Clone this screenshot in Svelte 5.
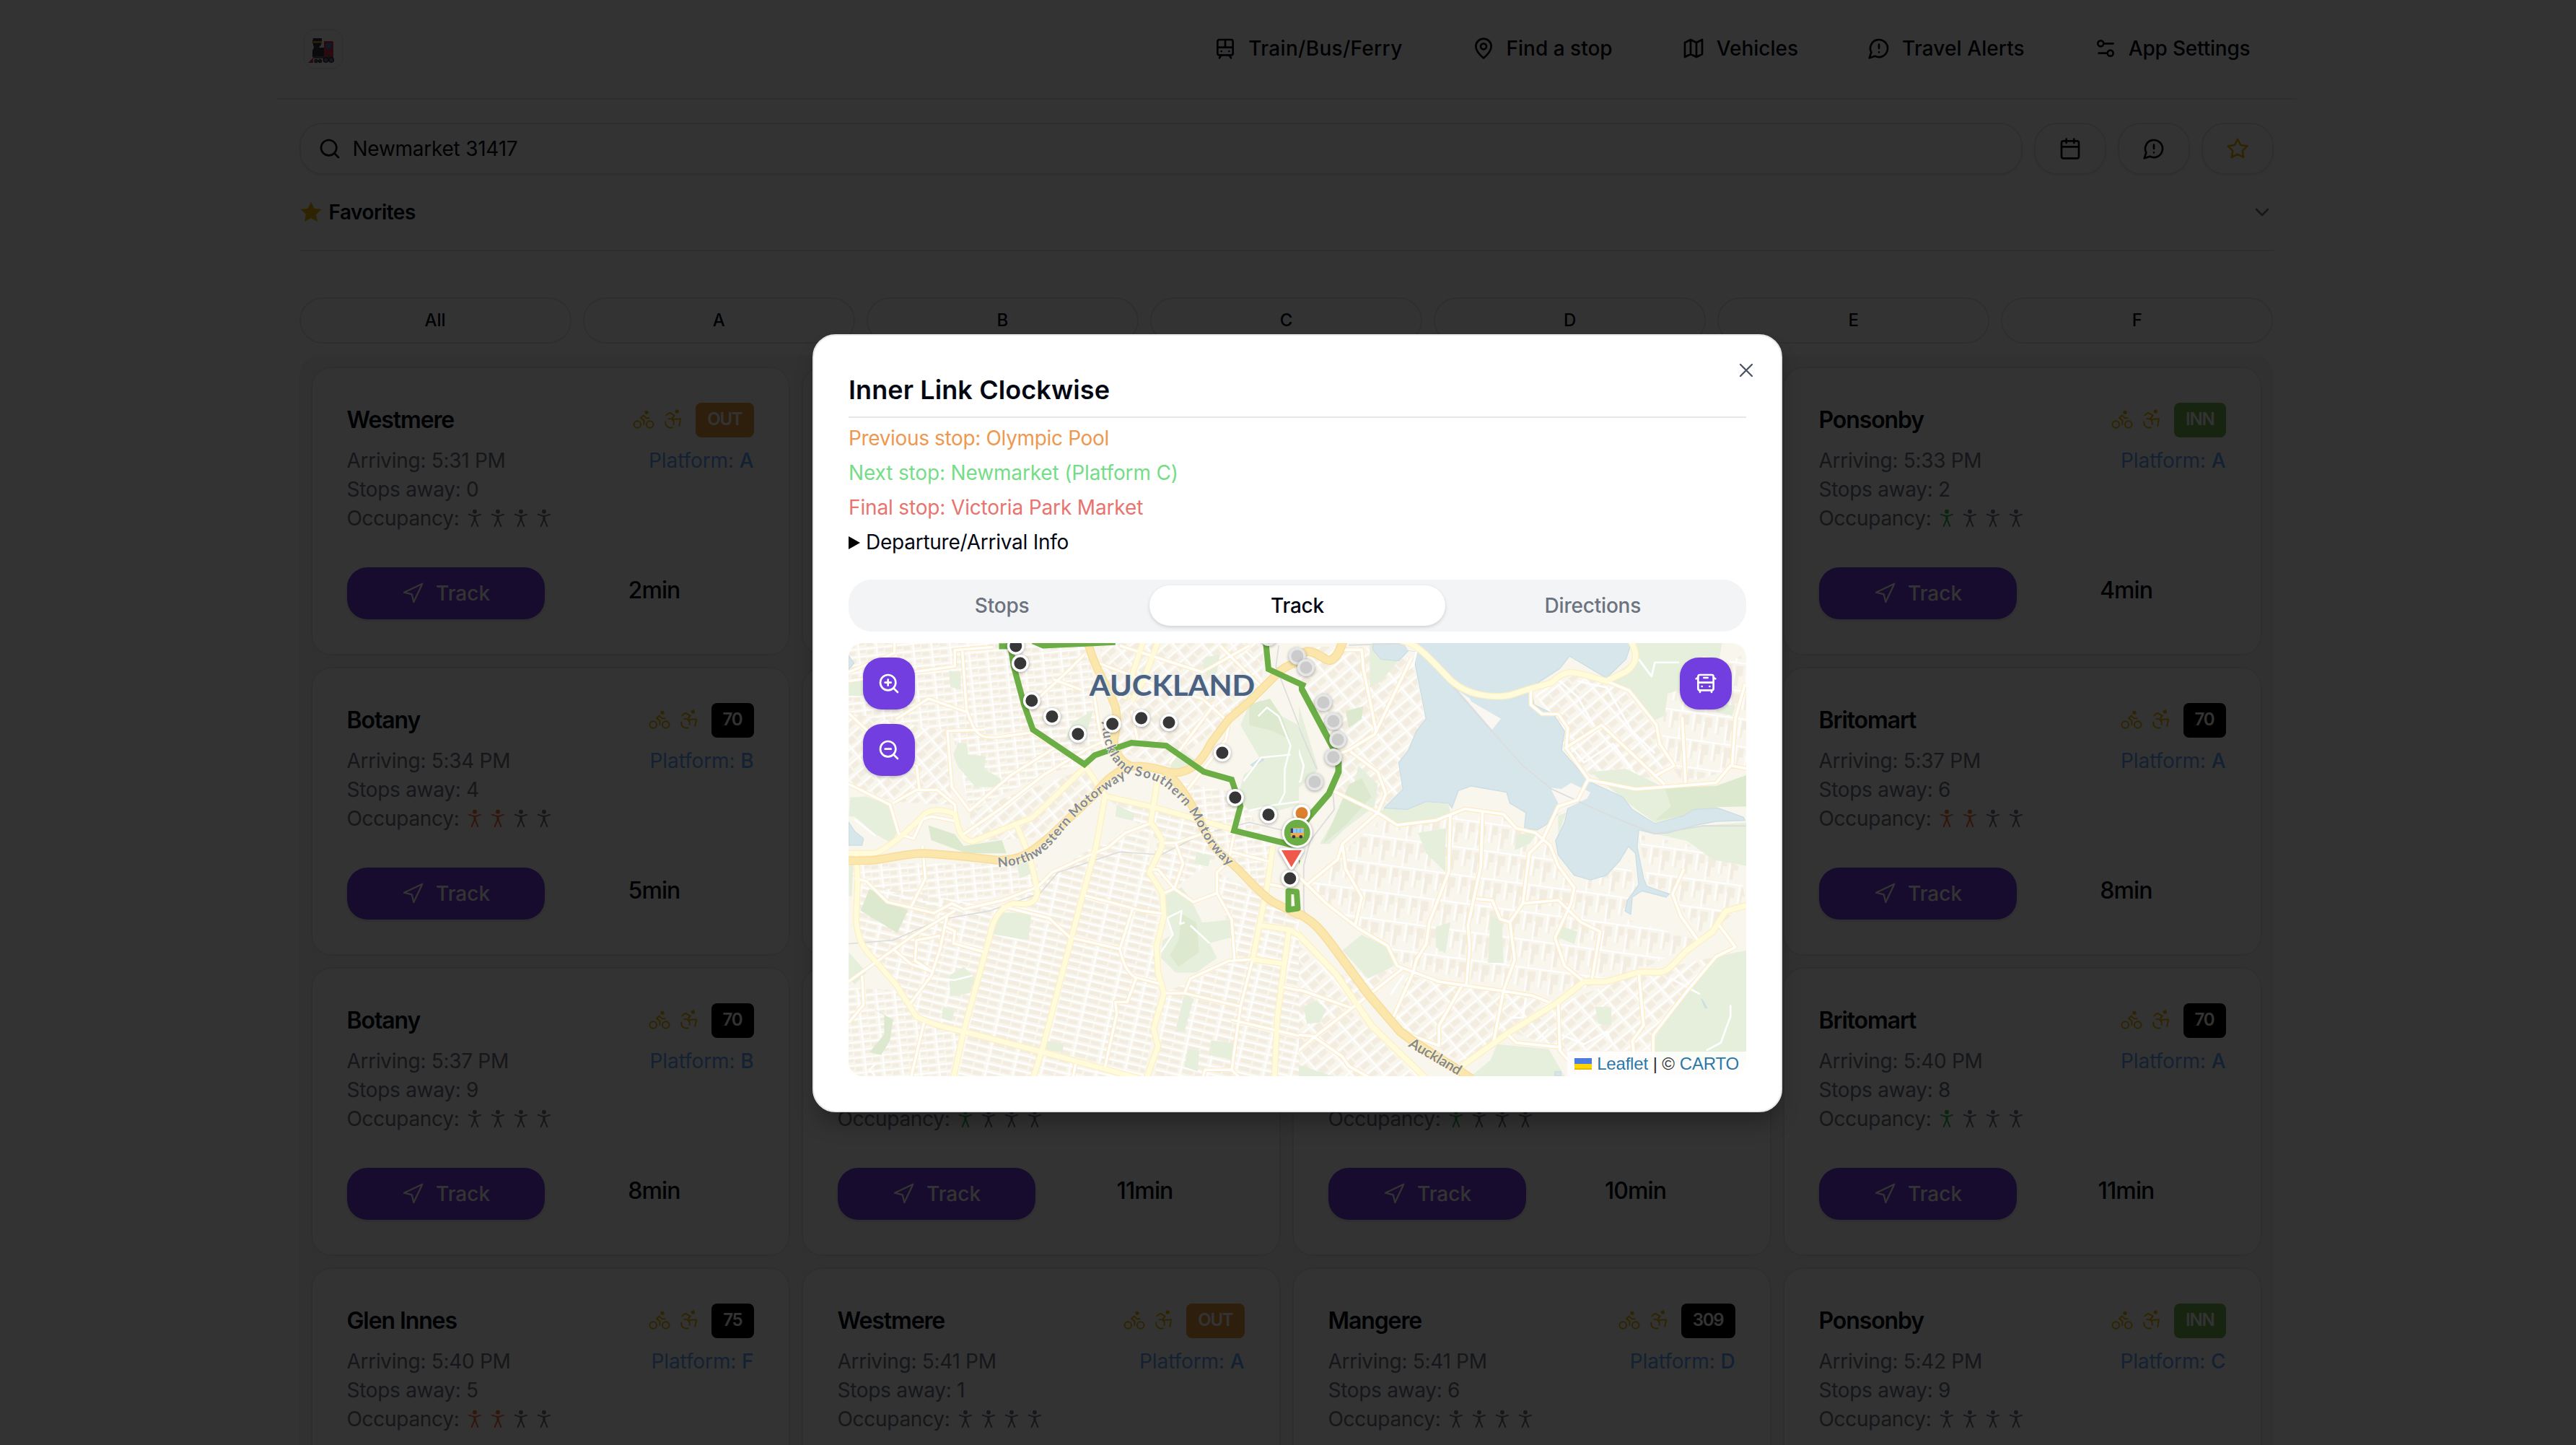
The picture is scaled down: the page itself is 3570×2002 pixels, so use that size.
<script>
  const nav = [
    { label: 'Train/Bus/Ferry', icon: 'train' },
    { label: 'Find a stop', icon: 'pin' },
    { label: 'Vehicles', icon: 'map' },
    { label: 'Travel Alerts', icon: 'alert' },
    { label: 'App Settings', icon: 'settings' }
  ];
  const platforms = ['All', 'A', 'B', 'C', 'D', 'E', 'F'];
  const out = '#e6963f', inn = '#75b552', black = '#000';
  const green = '#35b552', orange = '#f0703a';
  const cards = [
    { name: 'Westmere', time: '5:31 PM', away: 0, platform: 'A', badge: 'OUT', color: out, occ: 0, mins: 2 },
    null, null,
    { name: 'Ponsonby', time: '5:33 PM', away: 2, platform: 'A', badge: 'INN', color: inn, occ: 1, mins: 4 },
    { name: 'Botany', time: '5:34 PM', away: 4, platform: 'B', badge: '70', color: black, occ: 2, mins: 5 },
    null, null,
    { name: 'Britomart', time: '5:37 PM', away: 6, platform: 'A', badge: '70', color: black, occ: 2, mins: 8 },
    { name: 'Botany', time: '5:37 PM', away: 9, platform: 'B', badge: '70', color: black, occ: 0, mins: 8 },
    { name: '', occ: 1, mins: 11 },
    { name: '', occ: 1, mins: 10 },
    { name: 'Britomart', time: '5:40 PM', away: 8, platform: 'A', badge: '70', color: black, occ: 1, mins: 11 },
    { name: 'Glen Innes', time: '5:40 PM', away: 5, platform: 'F', badge: '75', color: black, occ: 2, mins: 10 },
    { name: 'Westmere', time: '5:41 PM', away: 1, platform: 'A', badge: 'OUT', color: out, occ: 0, mins: 11 },
    { name: 'Mangere', time: '5:41 PM', away: 6, platform: 'D', badge: '309', color: black, occ: 0, mins: 11 },
    { name: 'Ponsonby', time: '5:42 PM', away: 9, platform: 'C', badge: 'INN', color: inn, occ: 0, mins: 12 }
  ];
  const personColor = (occ, i) => (i < occ ? (occ === 1 ? green : orange) : '#6b7280');

  // Map geometry: the west sheet and the east sheet each use their own grid.
  const west = {
    parks: 'M45 575 100 572 190 605 205 690 185 730 130 700 60 640 40 640ZM410 390 440 390 445 430 505 435 500 480 555 510 560 540 470 540 410 470 395 430ZM550 965 660 970 650 1060 530 1040ZM1110 910 1170 880 1200 920 1240 1000 1340 990 1340 1050 1265 1070 1290 1120 1220 1170 1150 1170 1100 1120 1105 1060 1140 1040 1120 980ZM1400 260 1470 240 1510 300 1568 330 1568 600 1500 620 1400 620 1360 580 1380 500 1440 450 1370 330ZM380 1180 430 1150 470 1190 450 1240 385 1250ZM40 1100 100 1170 60 1210 40 1190ZM800 320 870 280 850 350 770 390ZM1270 1400 1348 1410 1340 1465 1262 1450ZM1180 1240 1210 1260 1180 1370 1148 1370ZM1250 100 1300 90 1290 150 1260 170 1240 130ZM1190 1430 1230 1435 1225 1505 1180 1490ZM360 1285 400 1295 390 1335 355 1325ZM1150 400 1220 450 1180 490 1130 480ZM950 600 1010 630 1005 655 945 640ZM1220 760 1270 775 1260 810 1215 800ZM380 145 420 150 420 210 385 200ZM40 180 120 170 90 230 40 230ZM700 1400 770 1410 765 1440 705 1430ZM610 800 660 790 670 830 620 850ZM40 800 55 800 50 910 40 910Z',
    woods: 'M110 885 240 960 205 1035 80 960ZM310 670 400 700 430 740 560 720 575 765 440 765 320 720ZM100 1280 190 1330 180 1400 150 1450 110 1440 160 1380 160 1310ZM1400 260 1470 240 1510 300 1540 380 1480 350 1400 330ZM1170 970 1220 1000 1230 1100 1160 1150 1130 1110 1160 1060Z',
    water: 'M40 660 L60 690 90 715 85 738 40 738ZM40 95 58 120 40 140ZM1405 465 1440 440 1448 448 1412 470Z',
    motor: 'M40 790H100C160 788 230 765 290 765C350 768 430 775 540 788C620 790 650 770 720 710L880 560C900 530 930 500 980 475C1000 465 1050 465 1130 490C1200 500 1240 450 1270 390L1330 310 1400 250 1480 170C1510 135 1540 120 1590 112M850 45C870 120 900 170 930 230C960 290 950 330 940 380C945 430 965 455 1000 470M1110 485C1160 520 1200 590 1230 650C1260 720 1290 760 1330 790C1390 840 1420 890 1480 930L1590 985',
    primary: 'M40 765H130C180 745 250 680 300 630C330 610 370 620 400 630C410 680 420 720 460 725L660 645C700 615 770 540 840 475M65 765 70 860 65 990C70 1060 90 1090 130 1130L200 1210 270 1320C320 1345 380 1360 430 1370L700 1440 1030 1530M840 465 910 570 880 740 820 960 700 1420 665 1530M905 570 1080 610 1350 685M1090 500 1075 600 1065 660C1110 720 1110 730 1095 760L1060 830 1105 900 1110 980 1085 1080 1090 1170 1110 1240 1075 1360 1090 1420 1050 1530M610 670C650 760 670 820 680 900C675 940 640 940 600 935C550 950 530 990 520 1040L430 1370 395 1530M1480 740 1460 880 1410 1130M1535 1020 1495 1320 1485 1530M1440 1010 1540 1025 1590 1060M1410 1125 1520 1140M1090 45 1040 180 1000 250M1040 45 975 240',
    secondary: 'M40 530 180 600 210 700 260 715 290 650 320 640 400 655M190 595 270 550 340 550 400 600 405 650M60 850 100 860 170 930 330 968 390 935 430 955 560 925 680 880 730 830 860 770 920 745 980 695 1060 665M530 65 400 75V130L40 180M425 75 440 280 460 330C480 370 500 375 550 370L660 355 740 400M440 285 310 240 200 310M40 290 180 420 270 470 280 550M500 345 375 350 390 540 450 620 590 500 750 400M430 700 560 610 700 500 850 410 905 385M660 260 780 150 840 90M735 175 830 210M890 120 1100 200 1240 240 1330 320M960 60 1240 150 1400 60M1300 60 1440 200M870 210 890 340 910 420M1000 280 1020 380M1280 260 1130 460M1330 330 1320 380 1190 550M290 740 300 850 250 950M375 970 350 1090 320 1180 245 1280M400 960 250 1050 40 1200M190 1090 250 1140 320 1165M85 1180 90 1280 40 1340M295 1340 250 1530M350 1045 270 1060 265 1130 320 1165M370 1015 400 1030 395 1070 500 1100M560 945 720 985 790 1050 960 1090C970 1130 980 1165 1010 1185L1105 1210M830 905 1035 960 1110 970M1005 950 960 1090M1015 1190 985 1270 945 1270 950 1310 910 1490M1110 1240 1180 1240 1370 1285M1180 1240 1200 1190 1330 1130 1410 1125M1350 1130 1340 990 1290 900 1290 830 1330 790 1350 690M1110 900 1145 885 1210 930 1290 900M1095 730 1150 730 1280 685M1150 730 1175 800 1145 885 1090 820 1065 820M1410 1130 1370 1285 1340 1500M1340 1330 1590 1390M1240 1530 1250 1500 1340 1500 1370 1530M1500 1215 1590 1235M1340 760 1475 795M1470 870 1590 895M800 1530 810 1480M195 50 195 85 40 150',
    minor: 'M1380 520 1440 440 1540 430M1430 300 1460 270 1500 300 1540 400 1520 480 1520 560 1500 600M1400 620 1490 600 1568 590M1120 985 1170 960 1165 1005 1180 1000M320 1190 400 1195 460 1180M60 650 130 705M130 1480 110 1500 130 1521M1265 1070 1200 1010M1380 70 1420 110M1100 1100 1140 1040 1120 980',
    rail: 'M40 1072 190 1060 350 990 520 960 690 900 750 830 960 760 1100 770 1240 700 1400 660 1568 700M1500 60 1490 130 1568 330',
    route: 'M550 62 600 62M587 50 600 130 635 260 665 345 840 463 875 432 1000 390 1118 400 1245 488 1340 515 1370 605 1348 688 1560 740M665 45 700 60 945 48M1455 40 1465 140 1590 198'
  };
  const east = {
    water: 'M275 40 275 70 300 100 355 105 385 72 410 75 405 110 440 290 410 330 385 390 355 430 368 515 310 575 380 580 440 555 510 560 520 575 540 520 580 505 690 525 700 560 750 590 745 640 785 645 810 630 843 600 870 575 880 575 870 620 842 680 850 725 900 790 950 805 1000 790 1040 745 1068 698 1090 720 1100 820 1065 870 1058 905 1075 915 1080 860 1110 840 1185 860 1195 850 1125 825 1115 800 1095 700 1100 645 1150 658 1190 655 1280 630 1340 618 1430 615 1425 605 1345 575 1270 580 1240 600 1150 625 1080 580 1050 540 945 490 860 390 870 330 835 275 775 245 765 190 855 130 885 90 1000 160 1060 100 1080 40ZM1295 1185 1312 1214 1306 1214ZM840 1418H858V1432H840Z',
    land: 'M825 510 860 515 890 495 950 525 940 545 880 575 840 600 850 560ZM540 200 575 225 580 235 672 290 645 325ZM410 40 365 40 385 72 410 75Z',
    parks: 'M1080 40 1360 40 1350 100 1300 90 1250 190 1190 210 1180 280 1140 300 1060 190 1000 165 1080 110ZM950 460 1060 450 1180 510 1340 505 1434 470 1434 570 1345 572 1240 600 1150 622 1080 570ZM1150 658 1280 632 1434 622 1434 760 1330 740 1250 680ZM310 575 380 580 440 557 510 562 515 590 460 615 350 625 290 595ZM230 440 290 500 280 570 190 640 140 690 110 690 150 620 200 560ZM415 655 500 640 500 780 440 720ZM180 1030 240 980 320 1020 340 1080 260 1120ZM640 920 675 930 680 1070 632 1070ZM1434 1030 1434 1380 1150 1380 1150 1310 1230 1180 1340 1050ZM660 1330 820 1345 870 1432 580 1432 640 1380ZM850 950 910 970 900 1010 840 985ZM965 1210 1015 1212 1015 1270 975 1265ZM720 660 785 655 760 690 715 710ZM60 1210 100 1190 130 1220 110 1260 70 1265ZM45 250 105 450 90 470 45 510ZM265 55 380 60 350 110 300 170 265 190ZM470 955 515 940 500 1040 470 1020ZM0 1380 150 1432 0 1432ZM1350 240 1400 250 1390 280 1340 270ZM850 600 875 590 850 660Z',
    woods: 'M1180 510 1340 505 1434 470 1434 570 1345 572 1240 600 1150 615 1200 570ZM190 265 245 250 240 290 200 320ZM200 500 240 480 270 540 190 630 120 690 150 620Z',
    motor: 'M-10 890 30 905C90 935 110 960 160 1030L260 1170 360 1290C420 1340 480 1370 580 1440M-10 108 70 75C110 75 130 115 150 100 170 85 175 60 182 40',
    primary: 'M360 40C420 50 460 110 520 170C570 215 640 225 700 215L760 195 830 175C870 130 900 140 950 155L1000 170 1060 140C1100 110 1095 80 1075 40M0 955 30 965 160 1105 270 1270 440 1440M1440 885 1370 905 1330 970 1250 1030C1200 1080 1190 1105 1150 1100L1100 1100 1000 1130 930 1130 850 1195 700 1290 550 1400M15 965 0 1110',
    secondary: 'M180 70H240L245 130 285 330M395 95 280 340 200 390 150 410M205 395 290 460 315 530 290 590 350 630 470 615 560 578 680 595 720 640 780 655 825 695M150 520 290 590 180 690 165 740 70 820M945 480 910 550 850 570 800 680 760 720 740 880 700 940 715 1060 680 1160 650 1320M825 695 850 760 900 830 890 880 840 990 870 1080 925 1125M515 595 510 780 450 940 440 1010 410 1060 400 1100 335 1250M615 590 610 760 570 950 575 1020 565 1140M595 865 645 870 670 930 700 940M740 880 850 870 920 940 980 970 955 1120M180 690 190 770 240 860 220 950M40 790 130 880 230 960 320 1015 350 1080 480 1130 680 1160 770 1175 820 1195M365 1090 240 1190 90 1310 0 1390M0 1145 60 1160 210 1215M0 1295 90 1305 180 1370 200 1400 270 1440M550 1145 480 1270V1335L390 1300 330 1260M690 1295 720 1325 860 1340M850 1195 855 1350 880 1380M1100 1100 1115 1270 1080 1320 1085 1360M1145 1360V1300L1250 1160 1340 1050 1400 1020 1350 950M1000 170 1070 200 1155 310 1165 370 1210 440 1155 470M765 195V245L800 275 850 275 880 320 875 385 945 485 1090 515 1340 495 1385 440 1440 450M1390 440 1400 290 1430 180M870 385 985 310 1180 500M1235 285 1245 495M1240 770 1205 850 1230 920 1285 1000',
    minor: 'M410 75 400 120 300 200M780 220 850 165 910 220 960 310M910 170 1000 190 1080 330 1150 400M890 380 930 430 1020 370 1080 450M700 1245 740 1245 750 1180M330 1170 370 1110M1310 1350 1355 1325 1385 1240V1205M1100 100 1140 155 1150 110 1225 110M0 380 40 380 60 440 50 490 20 500M860 1300 930 1330 1000 1290 1020 1330M780 1320 820 1280M1180 1150 1200 1120 1290 1170',
    rail: 'M150 520 155 580 80 680 60 760 60 900 75 935M525 190 640 325 740 440 830 515 1000 595 1150 658 1300 632 1440 633M0 210 100 450M200 55 360 50',
    route: 'M-10 150 45 178 155 390 168 430 168 460 138 530 75 605 45 650M40 740 22 790'
  };
  // Street grids: pattern direction and the area it covers
  const westBlocks = [
    ['a', 'M40 50 850 50 900 380 840 460 700 500 450 620 390 350 40 290Z'],
    ['b', 'M450 620 840 480 900 560 700 710 460 725ZM40 290 375 350 390 600 190 590 40 530Z'],
    ['b', 'M890 50 1450 50 1440 250 1330 310 1130 470 950 420Z'],
    ['c', 'M860 750 1060 680 1060 830 1105 970 1090 1220 1080 1350 1040 1521 400 1521 520 1040 560 945 730 830Z'],
    ['a', 'M40 800 680 800 680 880 330 960 65 860ZM1150 520 1350 560 1480 740 1450 900 1330 780 1200 600ZM40 1220 200 1230 290 1350 420 1370 380 1521 40 1521Z'],
    ['c', 'M920 580 1200 630 1290 780 1150 880 1060 820 1090 720ZM1290 830 1480 930 1568 980V1521H1080L1110 1240 1350 1130ZM80 870 560 950 430 1370 270 1320 70 1060Z']
  ];
  const eastBlocks = [
    ['b', 'M45 60 245 60 400 100 435 290 355 430 365 515 290 590 150 520 150 400 45 190ZM785 220 900 150 1060 200 1150 320 1200 440 1160 480 950 470 870 380Z'],
    ['d', 'M290 620 500 600 740 610 820 700 900 830 1070 740 1090 830 1060 930 1290 1000 1100 1095 840 1180 380 1080 200 940 60 820Z'],
    ['b', 'M380 1110 840 1195 550 1390 340 1260ZM700 1290 850 1200 1100 1105 1340 1050 1230 1180 1140 1350 880 1350ZM0 980 160 1110 350 1090 200 1220 420 1432 0 1432Z'],
    ['d', 'M1180 220 1434 80V440L1240 495 1170 400ZM1100 660 1290 700 1410 760 1434 880 1300 990 1200 850 1130 820Z']
  ];
  const w = (x, y) => [1160 + x / 2.45, 870 + y / 2.45];
  const e = (x, y) => [1780 + x / 2.24, 870 + y / 2.306];
  const upcoming = [w(607, 61), w(622, 120), w(661, 247), w(730, 301), w(818, 360), w(935, 326), w(1033, 306), w(1127, 321), w(1308, 424), w(1352, 576), w(1465, 634), w(1538, 850)];
  const passed = [w(1465, 32), e(40, 90), e(67, 127), e(121, 238), e(152, 298), e(166, 357), e(152, 413), e(94, 492)];
</script>

{#snippet icon(name, cls)}
  <svg class={cls} viewBox="0 0 24 24" fill="none" stroke="currentColor" stroke-width="2" stroke-linecap="round" stroke-linejoin="round">
    {#if name === 'train'}
      <rect width="16" height="16" x="4" y="3" rx="2" /><path d="M4 11h16M12 3v8m-4 8-2 3m12 0-2-3M8 15h.01M16 15h.01" />
    {:else if name === 'pin'}
      <path d="M20 10c0 6-8 12-8 12s-8-6-8-12a8 8 0 0 1 16 0Z" /><circle cx="12" cy="10" r="3" />
    {:else if name === 'map'}
      <path d="M3 6l6-3 6 3 6-3v15l-6 3-6-3-6 3zM9 3v15M15 6v15" />
    {:else if name === 'alert'}
      <path d="M7.9 20A9 9 0 1 0 4 16.1L2 22ZM12 8v4M12 16h.01" />
    {:else if name === 'settings'}
      <path d="M20 7h-9M14 17H5" /><circle cx="17" cy="17" r="3" /><circle cx="7" cy="7" r="3" />
    {:else if name === 'search'}
      <circle cx="11" cy="11" r="8" /><path d="m21 21-4.3-4.3" />
    {:else if name === 'calendar'}
      <rect width="18" height="18" x="3" y="4" rx="2" /><path d="M16 2v4M8 2v4M3 10h18" />
    {:else if name === 'star'}
      <path d="m12 2 3.09 6.26L22 9.27l-5 4.87 1.18 6.88L12 17.77l-6.18 3.25L7 14.14 2 9.27l6.91-1.01z" />
    {:else if name === 'chevron'}
      <path d="m6 9 6 6 6-6" />
    {:else if name === 'nav'}
      <path d="m3 11 19-9-9 19-2-8-8-2z" />
    {:else if name === 'zoomin'}
      <circle cx="11" cy="11" r="8" /><path d="m21 21-4.35-4.35M11 8v6M8 11h6" />
    {:else if name === 'zoomout'}
      <circle cx="11" cy="11" r="8" /><path d="m21 21-4.35-4.35M8 11h6" />
    {:else if name === 'bus'}
      <path d="M4 6 2 7M10 6h4M22 7l-2-1M4 11h16M8 15h.01M16 15h.01M6 19v2M18 21v-2" /><rect width="16" height="16" x="4" y="3" rx="2" />
    {:else if name === 'close'}
      <path d="M18 6 6 18M6 6l12 12" />
    {/if}
  </svg>
{/snippet}

{#snippet roads(s)}
  <path class="water" d={s.water} />
  {#if s.land}<path class="land" d={s.land} />{/if}
  <path class="minor" d={s.minor} />
  <path class="rail" d={s.rail} />
  <path class="secondary-case" d={s.secondary} />
  <path class="primary-case" d={s.primary} />
  <path class="secondary" d={s.secondary} />
  <path class="primary" d={s.primary} />
  <path class="motor-case" d={s.motor} />
  <path class="motor" d={s.motor} />
{/snippet}

<div class="app">
  <div class="page">
    <header class="topbar">
      <div class="logo">
        <svg viewBox="0 0 80 72">
          <path fill="#343442" d="M26 21h12v4l-1 5-3 4h7v13H25V38l2-4-2-8z" />
          <path fill="#e0a030" d="M26 25h12v2.5H26z" />
          <path fill="#c9364f" d="M41 26q0-1 1-1h10q2 0 2 1v20H41z" />
          <path fill="#3f90c0" d="M44 28h7v7h-7z" />
          <path fill="#665a6a" d="M26 46h28v3H26z" />
          <path fill="#c9364f" d="M26 48v7h-7z" />
          <g fill="#777086" stroke="#343442" stroke-width="1.5"><circle cx="43.500" cy="51" r="3.300" /><circle cx="51" cy="51" r="3.300" /><circle cx="30" cy="52.500" r="2" /><circle cx="35.500" cy="52.500" r="2" /></g>
        </svg>
      </div>
      <nav>
        {#each nav as item}
          <a class="nav-item">{@render icon(item.icon, 'i32')}<span>{item.label}</span></a>
        {/each}
      </nav>
    </header>

    <main>
      <div class="search-row">
        <div class="search">{@render icon('search', 'i32')}<span>Newmarket 31417</span></div>
        <div class="icon-btn">{@render icon('calendar', 'i32')}</div>
        <div class="icon-btn">{@render icon('alert', 'i32')}</div>
        <div class="icon-btn gold">{@render icon('star', 'i32')}</div>
      </div>
      <div class="favorites">
        <svg class="fav-star" viewBox="0 0 24 24"><path fill="currentColor" d="m12 1 3.300 7.100 7.700.9-5.700 5.300 1.500 7.700L12 18.200 5.200 22l1.500-7.700L1 9l7.700-.9z" /></svg>
        <span>Favorites</span>
        {@render icon('chevron', 'i32 chev')}
      </div>
      <div class="platforms">
        {#each platforms as p}<div class="platform">{p}</div>{/each}
      </div>
      <div class="panel">
        {#each cards as c}
          <article class="card">
            {#if c}
              <div class="head">
                <h3>{c.name}</h3>
                {#if c.badge}
                  <svg class="trait" viewBox="714 52 96 96" fill="none" stroke="currentColor" stroke-width="6" stroke-linejoin="round" stroke-linecap="round">
                    <circle cx="736" cy="118" r="14.500" /><circle cx="788" cy="118" r="14.500" /><circle cx="774" cy="68" r="5" fill="currentColor" />
                    <path d="M761 81 750 91 763 101V118M762 81 773 92H784" />
                  </svg>
                  <svg class="trait" viewBox="834 52 96 96" fill="none" stroke="currentColor" stroke-width="6" stroke-linejoin="round" stroke-linecap="round">
                    <circle cx="898" cy="64" r="5" fill="currentColor" />
                    <path d="M853 80 867 69 887 81 876 95M862 95C876 92 886 100 884 118M850 107C848 124 862 136 879 131M884 97 912 95 907 124" />
                  </svg>
                  <span class="badge" style:background={c.color}>{c.badge}</span>
                {/if}
              </div>
              <div class="line">
                {#if c.time}<span>Arriving: {c.time}</span><span class="plat">Platform: <b>{c.platform}</b></span>{/if}
              </div>
              <div class="line">{#if c.time}Stops away: {c.away}{/if}</div>
              <div class="line occ">
                <span>Occupancy:</span>
                {#each [0, 1, 2, 3] as i}
                  <svg viewBox="9 456 96 96" style:color={personColor(c.occ, i)} stroke="currentColor" fill="none" stroke-width="6" stroke-linecap="round" stroke-linejoin="round">
                    <circle cx="57" cy="476" r="5.500" fill="currentColor" /><path d="M32 488 50 494H64L82 488M55 497V511L44 537M59 497V511L70 537M57 496V512" />
                  </svg>
                {/each}
              </div>
              <div class="actions">
                <div class="track">{@render icon('nav', 'i32 thin')}<span>Track</span></div>
                <div class="mins">{c.mins}min</div>
              </div>
            {/if}
          </article>
        {/each}
      </div>
    </main>
  </div>

  <div class="overlay"></div>

  <section class="modal">
    <div class="close">{@render icon('close', 'i32 thin')}</div>
    <h2>Inner Link Clockwise</h2>
    <p class="prev">Previous stop: Olympic Pool</p>
    <p class="next">Next stop: Newmarket (Platform C)</p>
    <p class="final">Final stop: Victoria Park Market</p>
    <p class="info"><svg viewBox="0 0 16 20"><path d="M0 1 16 10 0 19z" /></svg>Departure/Arrival Info</p>
    <div class="tabs">
      <div>Stops</div>
      <div class="active">Track</div>
      <div>Directions</div>
    </div>
    <div class="map">
      <svg class="tiles" viewBox="1176 891 1244 600">
        <defs>
          <pattern id="a" width="62" height="26" patternUnits="userSpaceOnUse" patternTransform="rotate(-6)"><path fill="#f3ede1" d="M7 6H26V16H7ZM31 8H54V21H31Z" /><path d="M0 2H62M3 0V26" stroke="#fff" stroke-width="4.500" /></pattern>
          <pattern id="b" width="76" height="38" patternUnits="userSpaceOnUse" patternTransform="rotate(-40)"><path fill="#f3ede1" d="M8 9H34V30H8ZM40 7H68V24H40Z" /><path d="M0 2H76M3 0V38" stroke="#fff" stroke-width="4.500" /></pattern>
          <pattern id="c" width="92" height="27" patternUnits="userSpaceOnUse" patternTransform="rotate(13)"><path fill="#f3ede1" d="M9 7H46V20H9ZM52 9H84V22H52Z" /><path d="M0 2H92M3 0V27" stroke="#fff" stroke-width="4.500" /></pattern>
          <pattern id="d" width="72" height="88" patternUnits="userSpaceOnUse" patternTransform="rotate(8)"><path fill="#f3ede1" d="M9 8H27V36H14V62H9ZM38 12H62V44H50V76H38Z" /><path d="M0 2H72M3 0V60M36 28V88" stroke="#fff" stroke-width="4.500" /></pattern>
          <path id="nw" d="M547 812C640 806 690 780 740 722C800 650 850 585 985 505" />
          <path id="so" d="M898 318C905 400 925 455 985 494C1020 508 1080 500 1140 562C1195 612 1213 650 1240 700C1260 738 1285 770 1330 810" />
          <clipPath id="cw"><path d="M0 0H1568V1568H0Z" /></clipPath>
          <clipPath id="ce"><path d="M44.800 0H1568V1568H44.800Z" /></clipPath>
        </defs>
        <g transform="translate(1160 870) scale(.40816)"><g clip-path="url(#cw)">
          {#each westBlocks as [p, d]}<path {d} fill="url(#{p})" />{/each}
          <path class="park" d={west.parks} /><path class="wood" d={west.woods} />
          {@render roads(west)}
        </g></g>
        <g transform="translate(1780 870) scale(.44643 .43365)"><g clip-path="url(#ce)">
          {#each eastBlocks as [p, d]}<path {d} fill="url(#{p})" />{/each}
          <path class="park" d={east.parks} /><path class="wood" d={east.woods} />
          {@render roads(east)}
          <path class="route" d={east.route} />
        </g></g>
        <g transform="translate(1160 870) scale(.40816)">
          <path class="route" d={west.route} />
          <text class="street"><textPath href="#nw" textLength="545">Northwestern Motorway</textPath></text>
          <text class="street"><textPath href="#so" textLength="690">Auckland Southern Motorway</textPath></text>
          <text class="city" x="857" y="230" textLength="562" lengthAdjust="spacingAndGlyphs">AUCKLAND</text>
        </g>
        <g transform="translate(1780 870) scale(.44643 .43365)">
          <text class="street east-label" textLength="182" transform="translate(383 1336) rotate(31)">Auckland</text>
        </g>
        <path class="loop" d="M1785.500 1234.500V1260.500L1798.500 1258.500 1797 1235.500Z" />
        {#each passed as [x, y]}<g class="stop"><circle cx={x} cy={y} r="12" fill="#e6e6e6" /><circle cx={x} cy={y} r="8.500" fill="#cbcbcb" /></g>{/each}
        {#each upcoming as [x, y]}<g class="stop"><circle cx={x} cy={y} r="12" fill="#fff" /><circle cx={x} cy={y} r="8.500" fill="#373737" /></g>{/each}
        <g class="stop"><circle cx="1804" cy="1126.700" r="12" fill="#fff" /><circle cx="1804" cy="1126.700" r="8.500" fill="#dc8030" /></g>
        <path class="stop" d="M1776 1178H1804L1789.700 1201.500Z" fill="#ee594a" stroke="#fff" stroke-width="7" stroke-linejoin="round" />
        <path d="M1776 1178H1804L1789.700 1201.500Z" fill="#ee594a" />
        <g class="stop"><circle cx="1797.700" cy="1153.700" r="21" fill="#fff" /><circle cx="1797.700" cy="1153.700" r="18" fill="#6cae46" /></g>
        <rect x="1788.700" y="1147" width="18.300" height="12.500" rx="1" fill="#f0a94e" /><path d="M1789.500 1148H1806.300V1154H1789.500Z" fill="#8cc8f5" /><path d="M1788.700 1147.500H1792V1154H1788.700Z" fill="#30466e" /><path d="M1797 1148V1154M1802 1148V1154" stroke="#5f8ec4" stroke-width=".8" /><circle cx="1793" cy="1159.300" r="2.300" fill="#3b3048" /><circle cx="1802.800" cy="1159.300" r="2.300" fill="#3b3048" />
      </svg>
      <div class="zoom">
        <div class="map-btn">{@render icon('zoomin', 'i32')}</div>
        <div class="map-btn">{@render icon('zoomout', 'i32')}</div>
      </div>
      <div class="map-btn locate">{@render icon('bus', 'i32')}</div>
      <div class="attribution">
        <svg viewBox="0 0 24 16"><path fill="#4c7be1" d="M0 0h24v9H0z" /><path fill="#ffd500" d="M0 8h24v6H0z" /><path fill="#e0bc00" d="M0 14h24v2H0z" /></svg>
        <a>Leaflet</a><span>| ©</span><a>CARTO</a>
      </div>
    </div>
  </section>
</div>

<style>
  :global(body) { overflow: hidden; background: #fff; }
  * { box-sizing: border-box; }
  .app { position: relative; width: 3570px; height: 2002px; overflow: hidden; font-family: Inter, "Liberation Sans", sans-serif; font-size: 28px; color: #030712; }
  .page { width: 3565px; }
  :global(.i32) { width: 32px; height: 32px; flex: none; display: block; }
  :global(.thin) { stroke-width: 1.7; }
  .topbar { width: 2800px; height: 138px; margin: 0 auto; padding: 0 32px; border-bottom: 2px solid #e5e7eb; display: flex; align-items: center; justify-content: space-between; }
  .logo { width: 56px; height: 56px; margin-left: 5px; border: 2px solid #eef0f2; border-radius: 16px; display: flex; align-items: center; justify-content: center; }
  .logo svg { width: 80px; height: 72px; flex: none; }
  nav { display: flex; gap: 32px; }
  .nav-item { display: flex; align-items: center; gap: 16px; padding: 0 32px; font-weight: 500; letter-spacing: 0; line-height: 32px; padding-bottom: 2px; }
  .nav-item:first-child { letter-spacing: 0.3px; }
  .nav-item:nth-child(4) { letter-spacing: 0.1px; }
  .nav-item:last-child { letter-spacing: -0.2px; }
  main { width: 2736px; margin: 0 auto; padding-top: 32px; }
  .search-row { display: flex; gap: 16px; height: 72px; }
  .search, .icon-btn { border: 2px solid #e5e7eb; border-radius: 32px; box-shadow: 0 2px 4px rgba(0, 0, 0, .06); display: flex; align-items: center; }
  .search { flex: 1; padding: 0 24px; gap: 16px; letter-spacing: -0.25px; }
  .icon-btn { width: 100px; justify-content: center; }
  .gold { color: #eab308; }
  .favorites { height: 106px; border-bottom: 2px solid #e5e7eb; display: flex; align-items: center; padding: 0 0 1px; gap: 9px; font-weight: 600; letter-spacing: -0.5px; }
  .fav-star { width: 32px; height: 32px; color: #eab308; }
  .favorites :global(.chev) { margin-left: auto; color: #6b7280; }
  .platforms { margin-top: 64px; display: grid; grid-template-columns: repeat(7, 1fr); gap: 16px; }
  .platform { height: 64px; border: 2px solid #e5e7eb; border-radius: 32px; display: flex; align-items: center; justify-content: center; font-size: 24px; font-weight: 500; padding-bottom: 1px; }
  .panel { margin-top: 16px; padding: 16px; background: #f3f4f6; border-radius: 28px; display: grid; grid-template-columns: repeat(4, 1fr); grid-auto-rows: 400px; gap: 16px; }
  .card { border: 2px solid #e5e7eb; border-radius: 28px; background: #fff; padding: 48px; }
  .head { display: flex; align-items: center; height: 48px; margin-bottom: 12px; }
  h3 { margin: 0 auto 0 0; font-size: 32px; font-weight: 600; letter-spacing: -1.1px; line-height: 48px; }
  .trait { width: 32px; height: 32px; margin-right: 9px; color: #eab308; }
  .trait + .badge { margin-left: 6px; }
  .badge { height: 48px; padding: 0 16px; border-radius: 8px; color: #fff; font-size: 24px; font-weight: 600; line-height: 46px; letter-spacing: -1.2px; }
  .line { height: 40px; display: flex; align-items: center; justify-content: space-between; color: #6b7280; letter-spacing: -0.3px; }
  .line.occ { justify-content: flex-start; }
  .occ span { margin-right: 6px; }
  .occ svg { width: 32px; height: 32px; flex: none; }
  .plat { color: #60a5fa; letter-spacing: -0.1px; }
  .plat b { font-weight: 500; }
  .actions { margin-top: 48px; display: grid; grid-template-columns: 1fr 1fr; gap: 16px; }
  .track { height: 72px; border-radius: 28px; background: #733ee0; color: #fff; display: flex; align-items: center; justify-content: center; gap: 16px; font-weight: 500; box-shadow: 0 2px 4px rgba(0, 0, 0, .15); }
  .mins { text-align: center; padding-right: 2px; font-size: 32px; font-weight: 500; line-height: 64px; letter-spacing: -0.9px; }
  .overlay { position: absolute; inset: 0; background: rgba(0, 0, 0, .8); }

  .modal { position: absolute; left: 1126px; top: 463px; width: 1344px; height: 1078px; padding: 46px 48px 48px; border: 2px solid #e5e7eb; border-radius: 32px; background: #fff; box-shadow: 0 20px 30px -6px rgba(0, 0, 0, .3); }
  .close { position: absolute; right: 32px; top: 32px; color: #4b5563; }
  h2 { margin: 0 0 6px; height: 68px; border-bottom: 2px solid #e5e7eb; font-size: 36px; font-weight: 600; line-height: 58px; letter-spacing: 0.1px; }
  p { margin: 0; height: 48px; line-height: 45px; letter-spacing: -0.25px; }
  .prev { color: #ee9850; letter-spacing: -0.35px; }
  .next { color: #75dd87; letter-spacing: -0.15px; }
  .final { color: #e8736f; letter-spacing: -0.15px; }
  .info { display: flex; align-items: center; gap: 8px; padding-bottom: 3px; }
  .info svg { width: 16px; height: 20px; }
  .tabs { margin-top: 26px; height: 72px; padding: 8px; border-radius: 32px; background: #f3f4f6; display: grid; grid-template-columns: repeat(3, 1fr); font-weight: 500; color: #6b7280; }
  .tabs div { display: flex; align-items: center; justify-content: center; border-radius: 28px; letter-spacing: -0.2px; }
  .tabs .active { background: #fff; color: #030712; box-shadow: 0 2px 5px rgba(0, 0, 0, .15); }
  .map { position: relative; margin-top: 16px; width: 1244px; height: 600px; border-radius: 20px; overflow: hidden; background: #f9f6ee; }
  .tiles { width: 1244px; height: 600px; display: block; }
  .zoom { position: absolute; left: 20px; top: 20px; display: grid; gap: 20px; }
  .map-btn { width: 72px; height: 72px; border-radius: 26px; background: #733ee0; color: #fff; display: flex; align-items: center; justify-content: center; box-shadow: 0 2px 4px rgba(0, 0, 0, .2); }
  .locate { position: absolute; right: 20px; top: 20px; }
  .attribution { position: absolute; right: 0; bottom: 0; height: 34px; padding: 0 10px; display: flex; align-items: center; gap: 7px; background: rgba(255, 255, 255, .8); font: 24px/34px "Liberation Sans", sans-serif; color: #333; letter-spacing: -0.2px; }
  .attribution svg { width: 24px; height: 16px; }
  .attribution a { color: #2a78ab; }

  path { fill-rule: nonzero; }
  .tiles .water { fill: #d7e6eb; stroke: #cbdde4; stroke-width: 3; }
  .tiles .land { fill: #faf7f2; }
  .park { fill: #e6efdc; }
  .wood { fill: #dce9cf; }
  .minor, .rail, .secondary, .secondary-case, .primary, .primary-case, .motor, .motor-case, .route { fill: none; stroke-linejoin: round; }
  .minor { stroke: #fff; stroke-width: 6; }
  .rail { stroke: #dcdcdc; stroke-width: 4; }
  .secondary-case { stroke: #fdecc3; stroke-width: 14; }
  .secondary { stroke: #fff; stroke-width: 8.5; }
  .primary-case { stroke: #fdefc4; stroke-width: 22; }
  .primary { stroke: #fffbdb; stroke-width: 16; }
  .motor-case { stroke: #f8dc9c; stroke-width: 29; }
  .motor { stroke: #fbe6ab; stroke-width: 22; }
  .route { stroke: #6cae46; stroke-width: 20; stroke-linejoin: miter; }
  .loop { fill: #f9f6ee; stroke: #6cae46; stroke-width: 8; stroke-linejoin: round; }
  .stop { filter: drop-shadow(0 1px 2px rgba(0, 0, 0, .35)); }
  .street { font-family: Lato, sans-serif; font-weight: 700; font-size: 45px; fill: #838a94; stroke: #fdf6e0; stroke-width: 4; paint-order: stroke; }
  .east-label { fill: #8a8a80; }
  .city { font-family: Lato, sans-serif; font-weight: 700; font-size: 99px; fill: #4a617f; stroke: #eef0f2; stroke-width: 7; paint-order: stroke; }
</style>
